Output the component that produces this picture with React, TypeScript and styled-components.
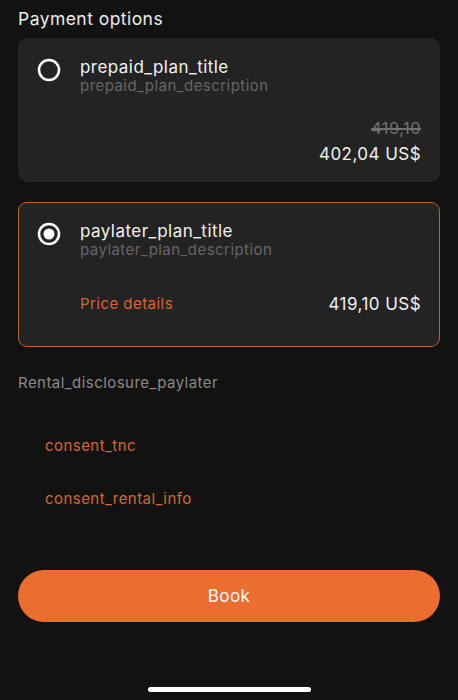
import * as React from "react";
import styled, {createGlobalStyle} from "styled-components";

const GlobalStyle = createGlobalStyle`
    html, body {
        margin: 0;
        padding: 0;
        background: #121212;
    }
    body {
        font-family: Inter, "Open Sans", "Liberation Sans", sans-serif;
        -webkit-font-smoothing: antialiased;
    }
`;

const ORANGE = "#eb6d2f";
const ORANGE_TEXT = "#d4692f";

const Screen = styled.div`
    width: 458px;
    height: 700px;
    box-sizing: border-box;
    padding: 8px 18px 0 18px;
    display: flex;
    flex-direction: column;
    background: #121212;
    overflow: hidden;
    letter-spacing: 0.45px;
`;

const Heading = styled.div`
    color: #ececec;
    font-size: 17.5px;
    line-height: 22px;
    margin-bottom: 8px;
`;

const Card = styled.div<{ $selected?: boolean }>`
    box-sizing: border-box;
    background: #232323;
    border-radius: 9px;
    border: 1px solid ${props => props.$selected ? "#bf622f" : "#232323"};
    padding: 18px 18px 17px 18px;
    display: flex;
    flex-direction: column;
    margin-bottom: 20px;
`;

const CardHeader = styled.div`
    display: flex;
    align-items: flex-start;
`;

const RadioSlot = styled.div`
    width: 43px;
    padding-top: 1px;
    flex-shrink: 0;
`;

const PlanText = styled.div`
    display: flex;
    flex-direction: column;
`;

const PlanTitle = styled.div`
    color: #f2f2f2;
    font-size: 17px;
    line-height: 20px;
`;

const PlanDescription = styled.div`
    color: #666;
    font-size: 15px;
    line-height: 18px;
`;

const CardFooter = styled.div<{ $top: number, $bottom: number }>`
    display: flex;
    justify-content: space-between;
    align-items: flex-end;
    margin-top: ${props => props.$top + "px"};
    margin-bottom: ${props => props.$bottom + "px"};
    padding-left: 43px;
`;

const PriceDetails = styled.div`
    color: ${ORANGE_TEXT};
    font-size: 15px;
    line-height: 20px;
`;

const PriceColumn = styled.div`
    display: flex;
    flex-direction: column;
    align-items: flex-end;
    margin-left: auto;
`;

const OldPrice = styled.div`
    color: #707070;
    font-size: 16.5px;
    line-height: 18px;
    text-decoration: line-through;
    text-decoration-thickness: 2px;
    margin-bottom: 7px;
`;

const Price = styled.div`
    color: #f0f0f0;
    font-size: 17px;
    line-height: 20px;
`;

const Disclosure = styled.div`
    color: #8a8a8a;
    font-size: 15px;
    line-height: 20px;
    margin-top: 6px;
    margin-bottom: 43px;
`;

const ConsentLink = styled.div`
    color: ${ORANGE_TEXT};
    font-size: 15px;
    line-height: 20px;
    padding-left: 27px;
    margin-bottom: 33px;
`;

const BookButton = styled.button`
    margin-top: 28px;
    height: 52px;
    border: none;
    border-radius: 26px;
    background: ${ORANGE};
    color: #fff;
    font-family: inherit;
    font-size: 17px;
    letter-spacing: 0.45px;
    width: 100%;
`;

const HomeBar = styled.div`
    width: 163px;
    height: 5px;
    border-radius: 3px;
    background: #fff;
    margin: auto auto 8px auto;
`;

function Radio(props: { checked?: boolean }) {
    return (
        <svg width="24" height="24" viewBox="0 0 24 24">
            <circle cx="12" cy="12" r="10" fill="none" stroke="#fff" strokeWidth="2.5"/>
            {props.checked && <circle cx="12" cy="12" r="5.5" fill="#fff"/>}
        </svg>
    );
}

export default function App() {
    return (
        <>
            <GlobalStyle/>
            <Screen>
                <Heading>Payment options</Heading>

                <Card>
                    <CardHeader>
                        <RadioSlot><Radio/></RadioSlot>
                        <PlanText>
                            <PlanTitle>prepaid_plan_title</PlanTitle>
                            <PlanDescription>prepaid_plan_description</PlanDescription>
                        </PlanText>
                    </CardHeader>
                    <CardFooter $top={24} $bottom={0}>
                        <PriceColumn>
                            <OldPrice>419,10</OldPrice>
                            <Price>402,04 US$</Price>
                        </PriceColumn>
                    </CardFooter>
                </Card>

                <Card $selected>
                    <CardHeader>
                        <RadioSlot><Radio checked/></RadioSlot>
                        <PlanText>
                            <PlanTitle>paylater_plan_title</PlanTitle>
                            <PlanDescription>paylater_plan_description</PlanDescription>
                        </PlanText>
                    </CardHeader>
                    <CardFooter $top={35} $bottom={15}>
                        <PriceDetails>Price details</PriceDetails>
                        <Price>419,10 US$</Price>
                    </CardFooter>
                </Card>

                <Disclosure>Rental_disclosure_paylater</Disclosure>
                <ConsentLink>consent_tnc</ConsentLink>
                <ConsentLink>consent_rental_info</ConsentLink>

                <BookButton>Book</BookButton>
                <HomeBar/>
            </Screen>
        </>
    );
}
